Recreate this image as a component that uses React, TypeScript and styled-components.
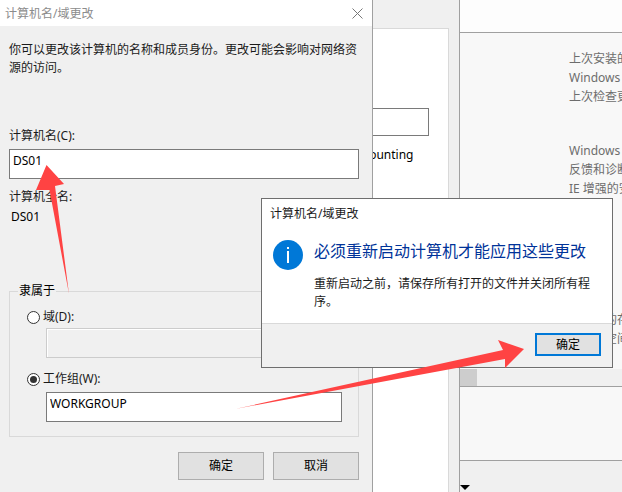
import styled, { createGlobalStyle } from 'styled-components';

const GlobalStyle = createGlobalStyle`
  html, body {
    margin: 0;
    padding: 0;
    background: #f0f0f0;
  }
  * {
    box-sizing: border-box;
  }
`;

const Desktop = styled.div`
  position: relative;
  width: 622px;
  height: 492px;
  overflow: hidden;
  font-family: 'Noto Sans', 'Noto Sans CJK SC', sans-serif;
  font-size: 12px;
  line-height: 18px;
  color: #000;
`;

/* windows behind the dialogs */
const MiddleWindow = styled.div`
  position: absolute;
  left: 300px;
  top: 0;
  width: 160px;
  height: 492px;
  padding: 28px 10px 0 0;
  background: #f0f0f0;
  border-right: 1px solid #a0a0a0;
`;

const WhitePanel = styled.div`
  height: 464px;
  padding-top: 79px;
  background: #fff;
  border-top: 1px solid #d9d9d9;
  border-right: 1px solid #d9d9d9;
`;

const GhostInput = styled.div`
  width: 129px;
  height: 28px;
  border: 1px solid #7a7a7a;
`;

const GhostText = styled.div`
  margin-top: 10px;
  padding-left: 50px;
`;

const RightWindow = styled.div`
  position: absolute;
  left: 460px;
  top: 0;
  width: 162px;
  height: 492px;
  display: flex;
  flex-direction: column;
  overflow: hidden;
  background: #f0f0f0;
`;

const RightTop = styled.div`
  height: 33px;
  flex: none;
  background: #fdfdfd;
  border-bottom: 1px solid #a0a0a0;
`;

const RightContent = styled.div`
  height: 336px;
  flex: none;
  padding: 16px 0 0 109px;
  background: #f8f8f8;
  color: #6d6d6d;
`;

const InfoGroup = styled.div<{ $gap: number }>`
  margin-bottom: ${p => p.$gap}px;
  line-height: 19px;
`;

const InfoLine = styled.div`
  white-space: nowrap;
`;

const ScrollStrip = styled.div`
  height: 18px;
  flex: none;
  background: #f0f0f0;
  border-bottom: 1px solid #a0a0a0;
`;

const ScrollThumb = styled.div`
  width: 17px;
  height: 17px;
  background: #cdcdcd;
`;

const RightPane = styled.div`
  height: 74px;
  flex: none;
  background: #f8f8f8;
  border-bottom: 1px solid #a0a0a0;
`;

const RightBottom = styled.div`
  flex: 1;
  padding-top: 24px;
`;

const DownTriangle = styled.div`
  width: 0;
  height: 0;
  border-left: 5px solid transparent;
  border-right: 5px solid transparent;
  border-top: 5px solid #000;
`;

/* main dialog */
const MainDialog = styled.div`
  position: absolute;
  left: 0;
  top: 0;
  width: 373px;
  height: 492px;
  background: #f0f0f0;
  border-right: 1px solid #a0a0a0;
`;

const TitleBar = styled.div`
  height: 26px;
  padding: 1px 9px 0 5px;
  display: flex;
  align-items: center;
  justify-content: space-between;
  background: #fff;
  color: #8c8c8c;
`;

const DialogBody = styled.div`
  padding: 15px 0 0 9px;
`;

const Intro = styled.div`
  width: 350px;
  height: 36px;
  color: #1a1a1a;
`;

const FieldLabel = styled.div<{ $top: number }>`
  margin-top: ${p => p.$top}px;
  color: #1a1a1a;
`;

const FullName = styled.div`
  margin-top: 2px;
  padding-left: 2px;
`;

const TextBox = styled.input<{ $width: number }>`
  display: block;
  width: ${p => p.$width}px;
  height: 30px;
  margin: 4px 0 0;
  padding: 0 3px 8px;
  border: 1px solid #7a7a7a;
  border-radius: 0;
  background: #fff;
  outline: none;
  font: inherit;
  color: #000;
`;

const GroupBox = styled.div`
  position: relative;
  width: 350px;
  height: 146px;
  margin-top: 65px;
  padding: 16px 0 0 17px;
  border: 1px solid #d9d9d9;
`;

const GroupLegend = styled.div`
  position: absolute;
  left: 8px;
  top: -10px;
  padding: 0 1px;
  background: #f0f0f0;
`;

const RadioRow = styled.div<{ $top: number }>`
  display: flex;
  align-items: center;
  gap: 3px;
  margin-top: ${p => p.$top}px;
  color: #1a1a1a;
`;

const RadioMark = styled.span<{ $checked?: boolean }>`
  width: 13px;
  height: 13px;
  display: flex;
  align-items: center;
  justify-content: center;
  border: 1px solid #333;
  border-radius: 50%;
  background: #fff;

  &::after {
    content: '';
    width: 7px;
    height: 7px;
    border-radius: 50%;
    background: ${p => (p.$checked ? '#333' : 'transparent')};
  }
`;

const DisabledBox = styled.div`
  width: 296px;
  height: 30px;
  margin: 2px 0 0 19px;
  border: 1px solid #cccccc;
  box-shadow: inset 1px 1px 0 #fff;
  background: #f0f0f0;
`;

const IndentedBox = styled.div`
  margin-left: 19px;
`;

const ButtonRow = styled.div`
  width: 350px;
  margin-top: 15px;
  display: flex;
  justify-content: flex-end;
  gap: 9px;
`;

const PushButton = styled.button`
  width: 86px;
  height: 28px;
  padding: 0;
  border: 1px solid #adadad;
  border-radius: 0;
  background: #e1e1e1;
  font: inherit;
  color: #000;
`;

/* restart prompt */
const RestartDialog = styled.div`
  position: absolute;
  left: 261px;
  top: 198px;
  width: 352px;
  height: 170px;
  display: flex;
  flex-direction: column;
  background: #fff;
  border: 1px solid #6e6e6e;
`;

const RestartTitle = styled.div`
  padding: 6px 0 0 8px;
  color: #1a1a1a;
`;

const MessageRow = styled.div`
  display: flex;
  gap: 11px;
  padding: 16px 0 0 11px;
  height: 100px;
`;

const InfoIcon = styled.svg`
  flex: none;
  margin-top: 1px;
`;

const MessageColumn = styled.div`
  width: 282px;
`;

const Heading = styled.div`
  font-size: 16px;
  line-height: 24px;
  color: #003399;
`;

const MessageText = styled.div`
  margin-top: 12px;
  color: #1a1a1a;
`;

const RestartFooter = styled.div`
  flex: 1;
  display: flex;
  justify-content: flex-end;
  padding: 9px 11px 0 0;
  background: #f0f0f0;
  border-top: 1px solid #d9d9d9;
`;

const DefaultButton = styled(PushButton)`
  width: 66px;
  height: 23px;
  border: 2px solid #0078d7;
`;

const ArrowLayer = styled.svg`
  position: absolute;
  left: 0;
  top: 0;
  pointer-events: none;
`;

const CloseIcon = () => (
  <svg width="11" height="11" viewBox="0 0 11 11">
    <path d="M0.5 0.5 L10.5 10.5 M10.5 0.5 L0.5 10.5" stroke="#777" strokeWidth="1" fill="none" />
  </svg>
);

export default function App() {
  return (
    <Desktop>
      <GlobalStyle />

      <MiddleWindow>
        <WhitePanel>
          <GhostInput />
          <GhostText>Accounting</GhostText>
        </WhitePanel>
      </MiddleWindow>

      <RightWindow>
        <RightTop />
        <RightContent>
          <InfoGroup $gap={35}>
            <InfoLine>上次安装的更新</InfoLine>
            <InfoLine>Windows 更新</InfoLine>
            <InfoLine>上次检查更新</InfoLine>
          </InfoGroup>
          <InfoGroup $gap={112}>
            <InfoLine>Windows 错误报告</InfoLine>
            <InfoLine>反馈和诊断</InfoLine>
            <InfoLine>IE 增强的安全配置</InfoLine>
          </InfoGroup>
          <InfoGroup $gap={0}>
            <InfoLine>此设备的存储</InfoLine>
            <InfoLine>可用的空间</InfoLine>
          </InfoGroup>
        </RightContent>
        <ScrollStrip>
          <ScrollThumb />
        </ScrollStrip>
        <RightPane />
        <RightBottom>
          <DownTriangle />
        </RightBottom>
      </RightWindow>

      <MainDialog>
        <TitleBar>
          <span>计算机名/域更改</span>
          <CloseIcon />
        </TitleBar>
        <DialogBody>
          <Intro>你可以更改该计算机的名称和成员身份。更改可能会影响对网络资源的访问。</Intro>
          <FieldLabel $top={50}>计算机名(C):</FieldLabel>
          <TextBox $width={350} defaultValue="DS01" readOnly />
          <FieldLabel $top={9}>计算机全名:</FieldLabel>
          <FullName>DS01</FullName>
          <GroupBox>
            <GroupLegend>隶属于</GroupLegend>
            <RadioRow $top={0}>
              <RadioMark />
              域(D):
            </RadioRow>
            <DisabledBox />
            <RadioRow $top={12}>
              <RadioMark $checked />
              工作组(W):
            </RadioRow>
            <IndentedBox>
              <TextBox $width={296} defaultValue="WORKGROUP" readOnly />
            </IndentedBox>
          </GroupBox>
          <ButtonRow>
            <PushButton>确定</PushButton>
            <PushButton>取消</PushButton>
          </ButtonRow>
        </DialogBody>
      </MainDialog>

      <RestartDialog>
        <RestartTitle>计算机名/域更改</RestartTitle>
        <MessageRow>
          <InfoIcon width="30" height="30" viewBox="0 0 30 30">
            <circle cx="15" cy="15" r="15" fill="#0078d7" />
            <rect x="14" y="7" width="2" height="2" fill="#fff" />
            <rect x="14" y="11" width="2" height="12" fill="#fff" />
          </InfoIcon>
          <MessageColumn>
            <Heading>必须重新启动计算机才能应用这些更改</Heading>
            <MessageText>重新启动之前，请保存所有打开的文件并关闭所有程序。</MessageText>
          </MessageColumn>
        </MessageRow>
        <RestartFooter>
          <DefaultButton>确定</DefaultButton>
        </RestartFooter>
      </RestartDialog>

      <ArrowLayer width="622" height="492" viewBox="0 0 622 492">
        <polygon points="46.5,165 64,184 55,186 69,294 49.5,190 36,190" fill="#ff4343" />
        <polygon points="524,349 498,340 503,350 235,409 505,359 505,368" fill="#ff4343" />
      </ArrowLayer>
    </Desktop>
  );
}
